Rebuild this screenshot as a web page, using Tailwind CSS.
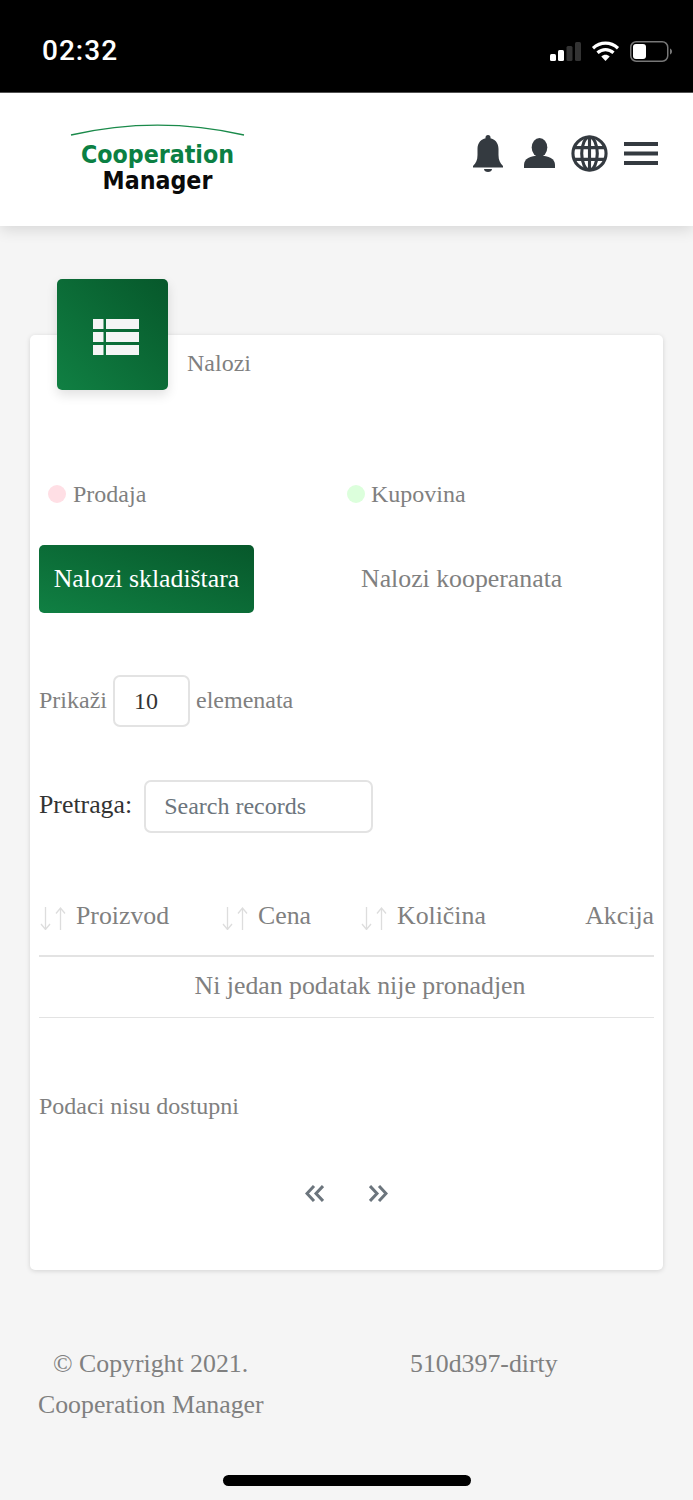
<!DOCTYPE html>
<html lang="en">
<head>
    <meta charset="UTF-8">
    <meta name="viewport" content="width=device-width, initial-scale=1.0">
    <title>Nalozi</title>
    <script src="https://cdn.jsdelivr.net/npm/@tailwindcss/browser@4"></script>
</head>
<body class="bg-[#f5f5f5] font-['Liberation_Serif',serif] text-[24px] leading-[30px] text-[#808080] h-[1500px] overflow-hidden relative">
    <!-- Status bar -->
    <div class="h-[93px] bg-black border-b border-[#555] flex items-center justify-between pl-[42px] pr-[21px] pt-[10px]">
        <span class="font-['Roboto',sans-serif] font-medium text-[28px] tracking-[1px] text-white">02:32</span>
        <div class="flex items-center gap-[10px]">
            <svg width="31" height="19" viewBox="0 0 31 19" fill="#fff">
                <rect x="0" y="12" width="6" height="7" rx="1.5"/>
                <rect x="8" y="8" width="6" height="11" rx="1.5"/>
                <rect x="16.500" y="4" width="6" height="15" rx="1.5" fill="#333"/>
                <rect x="25" y="0" width="6" height="19" rx="1.5" fill="#333"/>
            </svg>
            <svg width="29" height="20" viewBox="0 0 28 20" fill="none" stroke="#fff" stroke-width="3.2">
                <path d="M1.500 7.200C9 .5 19 .5 26.500 7.200"/>
                <path d="M6 11.800c4.800-4.300 11.200-4.300 16 0"/>
                <path d="M14 20 9.800 15.400c2.500-2.100 5.900-2.100 8.400 0z" fill="#fff" stroke="none"/>
            </svg>
            <svg width="42" height="21" viewBox="0 0 42 21" fill="none">
                <rect x="0.750" y="0.750" width="37" height="19.500" rx="5.500" stroke="#777" stroke-width="1.500"/>
                <rect x="3" y="3" width="13" height="15" rx="3" fill="#fff"/>
                <path d="M40 7.500c1.300.5 2 1.600 2 3s-.7 2.500-2 3z" fill="#777"/>
            </svg>
        </div>
    </div>

    <!-- Header -->
    <header class="h-[133px] bg-white shadow-[0_4px_14px_rgba(0,0,0,0.12)] flex items-center justify-between pl-[70px] pr-[35px] relative">
        <div class="w-[175px] flex flex-col items-center pb-[2px]">
            <svg width="175" height="13" viewBox="0 0 175 13" fill="none" class="mb-[6px]">
                <path d="M1 12C58 -1 117 -1 174 12" stroke="#1a8a4a" stroke-width="1.300"/>
            </svg>
            <span class="font-['DejaVu_Sans',sans-serif] font-bold [font-stretch:condensed] text-[24.700px] leading-[26px] text-[#0b8043]">Cooperation</span>
            <span class="font-['DejaVu_Sans',sans-serif] font-bold [font-stretch:condensed] text-[24.700px] leading-[26px] text-[#0a0a0a]">Manager</span>
        </div>
        <div class="flex items-center pb-[13px]">
            <svg width="30" height="37" viewBox="0 0 30 37" fill="#343a40">
                <circle cx="15" cy="2.500" r="2.500"/>
                <path d="M15 3C8 3 4.500 8 4.500 14v6c0 5-1.500 8-4.500 11v1.500h30V31c-3-3-4.500-6-4.500-11v-6C25.500 8 22 3 15 3z"/>
                <path d="M11 34h8c0 2-1.800 3-4 3s-4-1-4-3z"/>
            </svg>
            <svg width="31" height="30" viewBox="0 0 31 30" fill="#343a40" class="ml-[21px]">
                <ellipse cx="15.500" cy="9.500" rx="7.800" ry="9.500"/>
                <path d="M0 30v-3c0-6 6-9.500 15.500-9.500S31 21 31 27v3z"/>
            </svg>
            <svg width="37" height="37" viewBox="0 0 38 38" fill="none" stroke="#343a40" stroke-width="3.200" class="ml-[16px]">
                <circle cx="19" cy="19" r="17"/>
                <ellipse cx="19" cy="19" rx="8" ry="17"/>
                <path d="M3 13h32M3 25h32M19 2v34"/>
            </svg>
            <svg width="34" height="23" viewBox="0 0 34 23" fill="#343a40" class="ml-[16px]">
                <rect y="0" width="34" height="4"/>
                <rect y="9.500" width="34" height="4"/>
                <rect y="19" width="34" height="4"/>
            </svg>
        </div>
    </header>

    <!-- Card -->
    <main class="relative mx-[30px] mt-[109px] h-[935px] bg-white rounded-[5px] shadow-[0_1px_5px_rgba(0,0,0,0.14)] px-[9px]">
        <div class="absolute left-[27px] top-[-56px] w-[111px] h-[111px] rounded-[5px] bg-linear-to-tr from-[#108043] to-[#07582b] shadow-[0_5px_12px_rgba(0,0,0,0.12)] flex items-center justify-center">
            <svg width="46" height="36" viewBox="0 0 46 36" fill="#f5f5f5" class="ml-[6px] mt-[5px]">
                <rect x="0" y="0" width="10.500" height="10"/><rect x="13" y="0" width="33" height="10"/>
                <rect x="0" y="13" width="10.500" height="10"/><rect x="13" y="13" width="33" height="10"/>
                <rect x="0" y="26" width="10.500" height="10"/><rect x="13" y="26" width="33" height="10"/>
            </svg>
        </div>
        <div class="pl-[148px] pt-[13px]">Nalozi</div>

        <!-- Legend -->
        <div class="mt-[101px] flex">
            <div class="w-[308px] flex items-center pl-[9px]"><span class="w-[18px] h-[18px] rounded-full bg-[#ffdfe5] mr-[7px]"></span>Prodaja</div>
            <div class="flex items-center"><span class="w-[18px] h-[18px] rounded-full bg-[#dcffdc] mr-[6px]"></span>Kupovina</div>
        </div>

        <!-- Tabs -->
        <div class="mt-[36px] flex items-center text-[25.800px]">
            <div class="w-[215px] h-[68px] rounded-[5px] bg-linear-to-tr from-[#108043] to-[#07582b] text-white flex items-center justify-center">Nalozi skladištara</div>
            <div class="ml-[107px]">Nalozi kooperanata</div>
        </div>

        <!-- Page size -->
        <div class="mt-[62px] flex items-center">
            <span class="pb-[2px]">Prikaži</span>
            <div class="ml-[6px] mr-[6px] w-[77px] h-[52px] border-2 border-[#e3e3e3] rounded-[7px] flex items-center pl-[19px] text-[#333]">10</div>
            <span class="pb-[2px]">elemenata</span>
        </div>

        <!-- Search -->
        <div class="mt-[53px] flex items-center">
            <span class="text-[#333] text-[25.800px] pb-[3px]">Pretraga:</span>
            <div class="ml-[12px] w-[229px] h-[53px] border-2 border-[#e3e3e3] rounded-[7px] flex items-center pl-[18px] pb-[2px] text-[#6c757d]">Search records</div>
        </div>

        <!-- Table -->
        <div class="mt-[68px] h-[56px] border-b-2 border-[#e3e3e3] flex items-start text-[25.800px]">
            <div class="w-[182px] flex items-center">
                <svg width="27" height="23" viewBox="0 0 27 23" fill="none" stroke="#ddd" stroke-width="1.300" class="mr-[10px] mt-[4px]"><path d="M6.500 0v22M2 17l4.500 5.500L11 17M21.500 23V1M17 6.500 21.500 1 26 6.500"/></svg>Proizvod
            </div>
            <div class="w-[139px] flex items-center">
                <svg width="27" height="23" viewBox="0 0 27 23" fill="none" stroke="#ddd" stroke-width="1.300" class="mr-[10px] mt-[4px]"><path d="M6.500 0v22M2 17l4.500 5.500L11 17M21.500 23V1M17 6.500 21.500 1 26 6.500"/></svg>Cena
            </div>
            <div class="flex items-center">
                <svg width="27" height="23" viewBox="0 0 27 23" fill="none" stroke="#ddd" stroke-width="1.300" class="mr-[10px] mt-[4px]"><path d="M6.500 0v22M2 17l4.500 5.500L11 17M21.500 23V1M17 6.500 21.500 1 26 6.500"/></svg>Količina
            </div>
            <div class="ml-auto">Akcija</div>
        </div>
        <div class="h-[61px] border-b border-[#e3e3e3] flex items-center justify-center text-[25.800px] pl-[27px] pb-[2px]">Ni jedan podatak nije pronadjen</div>

        <div class="mt-[73px]">Podaci nisu dostupni</div>

        <!-- Pagination -->
        <div class="mt-[64px] flex justify-center gap-[45px]">
            <svg width="19" height="17" viewBox="0 0 19 17" fill="none" stroke="#6c757d" stroke-width="3">
                <path d="M9 1 2 8.500 9 16M18 1l-7 7.500L18 16"/>
            </svg>
            <svg width="19" height="17" viewBox="0 0 19 17" fill="none" stroke="#6c757d" stroke-width="3">
                <path d="M1 1l7 7.500L1 16M10 1l7 7.500L10 16"/>
            </svg>
        </div>
    </main>

    <!-- Footer -->
    <footer class="mt-[79px] pl-[38px] text-[25.800px]">
        <div class="flex">
            <span class="pl-[15px] w-[372px]">© Copyright 2021.</span>
            <span>510d397-dirty</span>
        </div>
        <div class="mt-[11px]">Cooperation Manager</div>
    </footer>

    <!-- Home indicator -->
    <div class="absolute left-[223px] top-[1475px] w-[248px] h-[11px] rounded-full bg-black"></div>
</body>
</html>
